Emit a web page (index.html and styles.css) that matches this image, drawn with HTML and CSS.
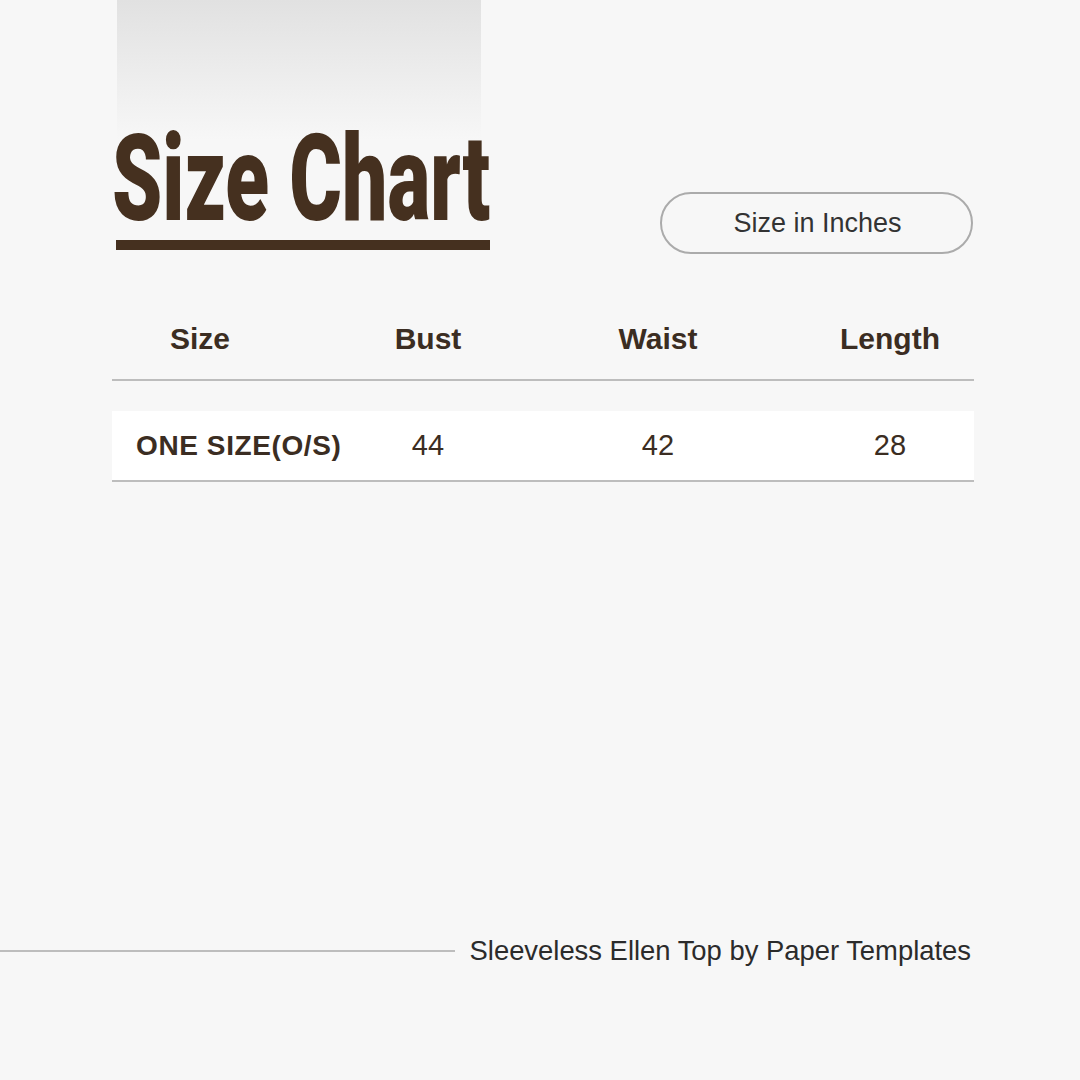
FILE: index.html
```html
<!DOCTYPE html>
<html lang="en">
<head>
<meta charset="utf-8">
<title>Size Chart</title>
<link rel="stylesheet" href="styles.css">
</head>
<body>
<div class="page">
  <header class="top">
    <div class="title-block">
      <h1 class="title">Size Chart</h1>
      <div class="title-bar"></div>
    </div>
    <div class="pill">Size in Inches</div>
  </header>
  <section class="table">
    <div class="row head">
      <div class="cell c1">Size</div>
      <div class="cell c2">Bust</div>
      <div class="cell c3">Waist</div>
      <div class="cell c4">Length</div>
    </div>
    <div class="row data">
      <div class="cell c1 name">ONE SIZE(O/S)</div>
      <div class="cell c2">44</div>
      <div class="cell c3">42</div>
      <div class="cell c4">28</div>
    </div>
  </section>
</div>
<footer class="footer">
  <div class="footer-line"></div>
  <div class="footer-text">Sleeveless Ellen Top by Paper Templates</div>
</footer>
</body>
</html>
```
FILE: styles.css
```css
html, body {
  margin: 0;
  padding: 0;
}
body {
  width: 1080px;
  height: 1080px;
  background: #f7f7f7;
  font-family: "Liberation Sans", Arial, sans-serif;
  overflow: hidden;
}
.page {
  padding: 0 106px 0 112px;
}
.top {
  display: flex;
  justify-content: space-between;
  align-items: flex-start;
}
.title-block {
  width: 378px;
  padding-top: 119px;
  background-image: linear-gradient(#e1e1e1, #f7f7f7);
  background-repeat: no-repeat;
  background-size: 364px 140px;
  background-position: 5px 0;
}
.title {
  margin: 0 0 0 0;
  font-family: Roboto, "Liberation Sans", sans-serif;
  font-weight: 900;
  font-size: 121px;
  line-height: 120px;
  height: 120px;
  color: #45301f;
  white-space: nowrap;
  transform: scaleX(0.665);
  transform-origin: left center;
  letter-spacing: 0;
}
.title-bar {
  margin: 1px 0 0 4px;
  width: 374px;
  height: 10px;
  background: #45301f;
}
.pill {
  margin-top: 192px;
  margin-right: 1px;
  box-sizing: border-box;
  width: 313px;
  height: 62px;
  border: 2px solid #ababab;
  border-radius: 31px;
  display: flex;
  align-items: center;
  justify-content: center;
  font-size: 27px;
  color: #333333;
  padding-left: 2px;
}
.table {
  margin-top: 44px;
}
.row {
  display: grid;
  grid-template-columns: 176px 280px 180px 1fr;
  align-items: center;
  color: #3b2d22;
}
.cell {
  text-align: center;
  white-space: nowrap;
}
.c4 {
  padding-left: 58px;
}
.head {
  height: 81px;
  border-bottom: 2px solid #bdbdbd;
  font-weight: 700;
  font-size: 30px;
}
.data {
  margin-top: 30px;
  height: 69px;
  background: #ffffff;
  border-bottom: 2px solid #bdbdbd;
  font-size: 29px;
}
.data .name {
  text-align: left;
  padding-left: 24px;
  font-weight: 700;
  font-size: 28px;
  letter-spacing: 0.6px;
}
.footer {
  margin-top: 452px;
  display: flex;
  align-items: center;
  gap: 15px;
  padding-right: 109px;
}
.footer-line {
  flex: 1;
  height: 2px;
  background: #bdbdbd;
}
.footer-text {
  font-size: 27.4px;
  line-height: 34px;
  color: #2b2b2b;
  white-space: nowrap;
}
```
